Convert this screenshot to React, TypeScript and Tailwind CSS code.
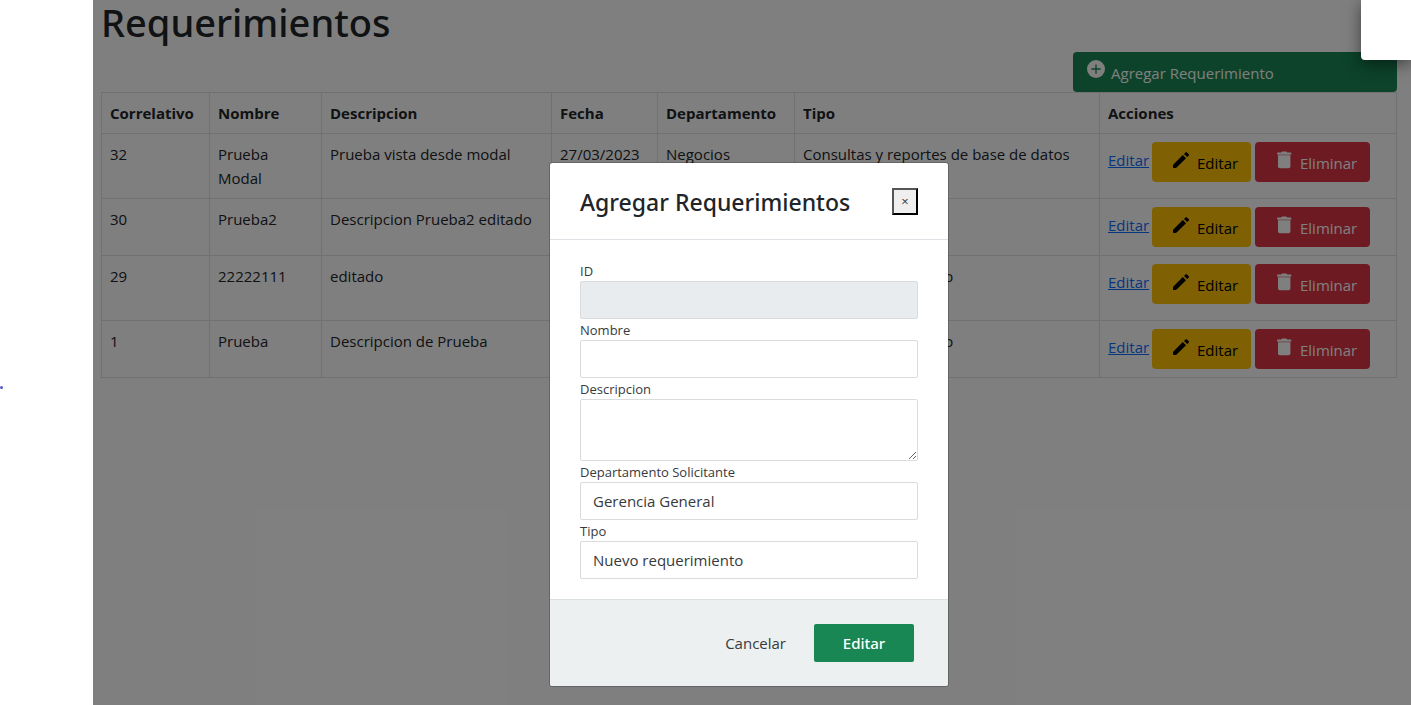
const requerimientos = [
  { id: 32, nombre: "Prueba Modal", descripcion: "Prueba vista desde modal", fecha: "27/03/2023", departamento: "Negocios", tipo: "Consultas y reportes de base de datos" },
  { id: 30, nombre: "Prueba2", descripcion: "Descripcion Prueba2 editado", fecha: "27/03/2023", departamento: "Negocios", tipo: "Soporte" },
  { id: 29, nombre: "22222111", descripcion: "editado", fecha: "27/03/2023", departamento: "Gerencia General", tipo: "Nuevo requerimiento" },
  { id: 1, nombre: "Prueba", descripcion: "Descripcion de Prueba", fecha: "27/03/2023", departamento: "Negocios", tipo: "Nuevo requerimiento" },
];

const columnas = ["Correlativo", "Nombre", "Descripcion", "Fecha", "Departamento", "Tipo", "Acciones"];

const celda = "border border-[#dee2e6] p-2 text-left align-top";
const campo = "block h-[38px] w-full rounded-xs border border-[#d9dbdd] px-3 text-[15px] leading-6 text-[#373a3c]";
const etiqueta = "block pt-px text-[13px] leading-5 text-[#373a3c]";

function IconoAgregar() {
  return (
    <svg viewBox="0 0 18 18" className="mt-2 mr-1.5 size-[18px] shrink-0" aria-hidden="true">
      <circle cx="9" cy="9" r="9" fill="currentColor" />
      <path d="M9 4.8v8.4M4.8 9h8.4" stroke="#198754" strokeWidth="1.3" strokeLinecap="round" />
    </svg>
  );
}

function IconoLapiz() {
  return (
    <svg viewBox="0 0 18 18" fill="currentColor" className="mt-[9px] mr-[7px] size-[18px] shrink-0" aria-hidden="true">
      <path d="M1 14.5q0-.6.4-1L10.8 4.1 14 7.3l-9.4 9.3q-.4.4-1 .4H1.7q-.7 0-.7-.7z" />
      <path d="M12 2.9 13.5 1.4q.7-.7 1.4 0L16.8 3.2q.7.7 0 1.4L15.2 6.1z" />
    </svg>
  );
}

function IconoBasura() {
  return (
    <svg viewBox="0 0 18 18" fill="currentColor" className="mt-[9px] mr-[7px] size-[18px] shrink-0" aria-hidden="true">
      <path d="M2.8 1.5H6.2L7 .6h4.4l.8.9h3.4q.7 0 .7.7v1.2H2.1V2.2q0-.7.7-.7z" />
      <path d="M3 4.2h12.4v11.3q0 1.8-1.8 1.8H4.8Q3 17.3 3 15.5z" />
      <path d="M3 3.4h12.4v.9H3z" opacity=".6" />
    </svg>
  );
}

function Tabla() {
  return (
    <table className="w-full table-fixed border-collapse">
      <colgroup>
        <col className="w-[108px]" />
        <col className="w-[112px]" />
        <col className="w-[230px]" />
        <col className="w-[106px]" />
        <col className="w-[137px]" />
        <col className="w-[305px]" />
        <col />
      </colgroup>
      <thead>
        <tr>
          {columnas.map((c) => (
            <th key={c} className={`${celda} font-bold`}>{c}</th>
          ))}
        </tr>
      </thead>
      <tbody>
        {requerimientos.map((r) => (
          <tr key={r.id}>
            <td className={celda}>{r.id}</td>
            <td className={celda}>{r.nombre}</td>
            <td className={celda}>{r.descripcion}</td>
            <td className={celda}>{r.fecha}</td>
            <td className={celda}>{r.departamento}</td>
            <td className={celda}>{r.tipo}</td>
            <td className={celda}>
              <div className="flex gap-1">
                <a href="#editar" className="w-10 pt-[6px] text-[#0d6efd] underline">Editar</a>
                <button className="flex h-10 w-[99px] rounded-sm bg-[#ffc107] pl-5 text-black">
                  <IconoLapiz />
                  <span className="mt-[9px]">Editar</span>
                </button>
                <button className="flex h-10 w-[115px] rounded-sm bg-[#dc3545] pl-5 text-white">
                  <IconoBasura />
                  <span className="mt-[9px]">Eliminar</span>
                </button>
              </div>
            </td>
          </tr>
        ))}
      </tbody>
    </table>
  );
}

function Modal() {
  return (
    <div role="dialog" aria-labelledby="titulo" className="w-[398px] rounded-xs bg-white outline outline-black/20">
      {/* Header */}
      <div className="flex h-[77px] items-center justify-between border-b border-[#dee2e6] px-[30px]">
        <h2 id="titulo" className="pt-0.5 font-['Noto_Sans','Open_Sans',sans-serif] text-[23px] leading-7 font-medium">Agregar Requerimientos</h2>
        <button aria-label="Cerrar" className="h-[27px] w-[26px] border-2 border-t-[#555] border-r-black border-b-black border-l-[#555] bg-[#efefef] text-[13px] leading-5 text-[#373a3c]">
          ×
        </button>
      </div>

      {/* Body */}
      <form className="px-[30px] py-5">
        <label htmlFor="id" className={etiqueta}>ID</label>
        <input id="id" disabled className={`${campo} bg-[#e9ecef]`} />
        <label htmlFor="nombre" className={etiqueta}>Nombre</label>
        <input id="nombre" className={campo} />
        <label htmlFor="descripcion" className={etiqueta}>Descripcion</label>
        <textarea id="descripcion" className="block h-[62px] w-full resize rounded-xs border border-[#d9dbdd] px-3 py-1.5 text-[15px]" />
        <label htmlFor="departamento" className={etiqueta}>Departamento Solicitante</label>
        <select id="departamento" className={`${campo} appearance-none`}>
          <option>Gerencia General</option>
        </select>
        <label htmlFor="tipo" className={etiqueta}>Tipo</label>
        <select id="tipo" className={`${campo} appearance-none`}>
          <option>Nuevo requerimiento</option>
        </select>
      </form>

      {/* Footer */}
      <div className="flex items-center justify-end gap-7 rounded-b-xs border-t border-[#dbe1e3] bg-[#ecf0f1] pt-6 pr-[34px] pb-6">
        <button className="text-[#373a3c]">Cancelar</button>
        <button className="h-[38px] w-[100px] rounded-xs bg-[#198754] font-['Noto_Sans','Open_Sans',sans-serif] font-medium text-white">Editar</button>
      </div>
    </div>
  );
}

export default function App() {
  return (
    <div className="flex min-h-screen overflow-hidden bg-white font-['Open_Sans','Noto_Sans',sans-serif] text-[15px] leading-6 text-[#212529]">
      <aside className="flex w-[93px] shrink-0 items-center pt-[70px]">
        <span className="size-[3px] rounded-full bg-[#5555cc]" />
      </aside>

      <main className="relative min-w-0 flex-1">
        <div className="pr-[14px] pl-2">
          <h1 className="h-[52px] font-['Noto_Sans','Open_Sans',sans-serif] text-[38px] leading-[44px] font-medium">Requerimientos</h1>
          <div className="flex justify-end">
            <button className="flex h-10 w-1/4 rounded-sm bg-[#198754] pl-3.5 text-white">
              <IconoAgregar />
              <span className="mt-[9px]">Agregar Requerimiento</span>
            </button>
          </div>
          <Tabla />
        </div>

        {/* Overlay */}
        <div className="absolute inset-0 flex items-start justify-center bg-black/50 pt-[163px] pr-1.5">
          <Modal />
        </div>

        {/* Corner panel */}
        <div className="absolute top-0 right-0 h-[60px] w-[50px] rounded-bl-sm bg-white shadow-[0_4px_16px_rgba(0,0,0,0.5)]" />
      </main>
    </div>
  );
}
